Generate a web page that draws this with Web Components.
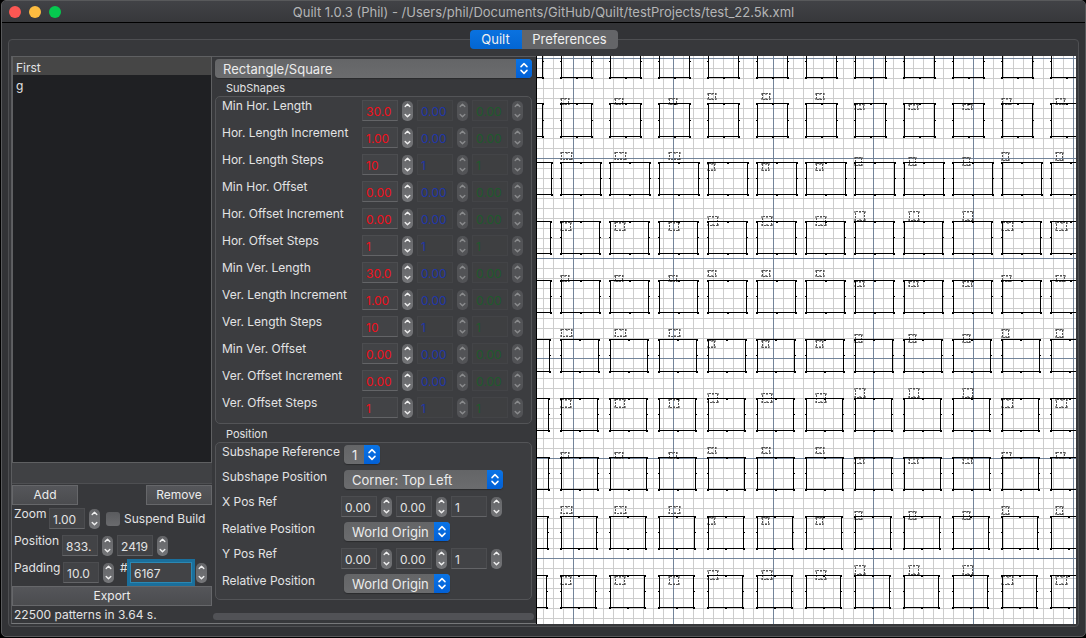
<!DOCTYPE html>
<html lang="en">
<head>
<meta charset="utf-8">
<title>Quilt 1.0.3</title>
<style>
  html, body { margin: 0; background: #000; }
  body { font: 12px/18px Inter, "Liberation Sans", sans-serif; color: #e3e3e4; }
</style>
</head>
<body>
<quilt-app></quilt-app>
<script>
const define = (name, markup, ready) => customElements.define(name, class extends HTMLElement {
  connectedCallback() {
    if (this.shadowRoot) return;
    const t = document.createElement('template');
    t.innerHTML = typeof markup === 'function' ? markup(this) : markup;
    this.attachShadow({ mode: 'open' }).append(t.content.cloneNode(true));
    if (ready) ready(this, this.shadowRoot);
  }
});

/* Number field with a pair of step buttons; the field itself is slotted in. */
define('spin-box', el => `
<style>
  :host { display: inline-flex; align-items: center; gap: 4px; flex: none; }
  ::slotted(input) {
    box-sizing: border-box; width: var(--field, 36px); height: 21px; margin: 0; padding: 2px 0 0 3px;
    border: 1px solid #4c4d50; border-bottom-color: #636467; border-radius: 0; outline: 0;
    background: #424346; color: var(--tone, #e3e3e4); font: inherit; line-height: 17px;
  }
  :host([off]) ::slotted(input) { background: #3e3f41; border-color: #434447; opacity: 1; }
  :host([focus]) ::slotted(input) { border: 1px solid #2b88b3; outline: 3px solid #1a6f9c; }
  .step { display: flex; flex-direction: column; width: 11px; height: 20px; border-radius: 5px; overflow: hidden; background: linear-gradient(#646568, #747578); }
  :host([off]) .step { background: #525356; }
  button { flex: 1; display: flex; align-items: center; justify-content: center; padding: 0; border: 0; background: none; color: #f0f0f0; min-height: 0; }
  :host([off]) button { color: #8a8b8d; }
  svg { width: 7px; height: 5px; display: block; fill: none; stroke: currentColor; stroke-width: 1.4; stroke-linecap: round; stroke-linejoin: round; }
</style>
<slot></slot>
<span class="step">
  <button type="button" tabindex="-1" aria-label="Increase" ${el.hasAttribute('off') ? 'disabled' : ''}><svg viewBox="0 0 7 5"><path d="M1.2 3.6 3.5 1.3 5.8 3.6"/></svg></button>
  <button type="button" tabindex="-1" aria-label="Decrease" ${el.hasAttribute('off') ? 'disabled' : ''}><svg viewBox="0 0 7 5"><path d="M1.2 1.4 3.5 3.7 5.8 1.4"/></svg></button>
</span>`);

/* Pop-up menu: a slotted select with the blue double arrow over its end. */
define('pop-up', `
<style>
  :host { display: inline-grid; flex: none; border-radius: 4px; font-size: 13px; }
  ::slotted(select) {
    grid-area: 1 / 1; appearance: none; box-sizing: border-box; width: 100%; height: 19px; margin: 0;
    padding: 1px 16px 0 8px; border: 0; border-radius: 4px; outline: 0;
    background: linear-gradient(#646567, #6b6c6e); color: #ececec; font: inherit; line-height: 18px;
    box-shadow: 0 1px 1px #2a2b2d;
  }
  .arrow { grid-area: 1 / 1; justify-self: end; width: 16px; height: 19px; border-radius: 0 4px 4px 0; background: linear-gradient(#0a74e6, #0260d6); pointer-events: none; z-index: 1; }
  svg { display: block; width: 16px; height: 19px; fill: none; stroke: #fff; stroke-width: 1.5; stroke-linecap: round; stroke-linejoin: round; }
</style>
<slot></slot>
<span class="arrow"><svg viewBox="0 0 16 19"><path d="M5 7.6 8 4.6 11 7.6M5 11.4 8 14.4 11 11.4"/></svg></span>`);

/* One line of the SubShapes form: a label and a red, a blue and a green value. */
define('param-row', el => {
  const [a, b] = el.getAttribute('values').split(',');
  const name = el.getAttribute('name');
  return `
<style>
  :host { display: flex; height: 27px; padding: 0 8px 0 6px; align-items: flex-start; }
  label { flex: 1; line-height: 18px; white-space: nowrap; }
  .fields { display: flex; gap: 4px; padding-top: 3px; }
  .r { --tone: #f0101c; } .g { --tone: #1f5a2c; } .b { --tone: #1f36a8; }
</style>
<label for="v">${name}</label>
<span class="fields">
  <spin-box class="r"><input id="v" value="${a}"></spin-box>
  <spin-box class="b" off><input disabled aria-label="${name}, second" value="${b}"></spin-box>
  <spin-box class="g" off><input disabled aria-label="${name}, third" value="${b}"></spin-box>
</span>`;
});

/* Titled group with a rounded frame. */
define('group-box', el => `
<style>
  :host { display: block; }
  h2 { margin: 0; padding-left: 11px; font-size: 11px; line-height: 15px; font-weight: 400; }
  .frame { border: 1px solid #535457; border-radius: 5px; background: #3c3d40; padding-bottom: 2px; }
</style>
<h2>${el.getAttribute('heading')}</h2>
<div class="frame"><slot></slot></div>`);

define('position-form', `
<style>
  :host { display: block; }
  .row { display: flex; height: 25px; padding-left: 6px; }
  .tall { height: 27px; }
  label { width: 122px; flex: none; line-height: 18px; white-space: nowrap; }
  pop-up { align-self: flex-start; margin-top: 2px; }
  .fields { display: flex; gap: 4px; padding-top: 3px; margin-left: -3px; height: 21px; }
  .w1 { width: 36px; } .w2 { width: 159px; } .w3 { width: 106px; }
</style>
<div class="row"><label for="a">Subshape Reference</label><pop-up class="w1"><select id="a"><option>1</option></select></pop-up></div>
<div class="row"><label for="b">Subshape Position</label><pop-up class="w2"><select id="b"><option>Corner: Top Left</option></select></pop-up></div>
<div class="row tall"><label for="c">X Pos Ref</label><span class="fields">
  <spin-box><input id="c" value="0.00"></spin-box><spin-box><input aria-label="X Pos Ref, second" value="0.00"></spin-box><spin-box><input aria-label="X Pos Ref, third" value="1"></spin-box></span></div>
<div class="row"><label for="d">Relative Position</label><pop-up class="w3"><select id="d"><option>World Origin</option></select></pop-up></div>
<div class="row tall"><label for="e">Y Pos Ref</label><span class="fields">
  <spin-box><input id="e" value="0.00"></spin-box><spin-box><input aria-label="Y Pos Ref, second" value="0.00"></spin-box><spin-box><input aria-label="Y Pos Ref, third" value="1"></spin-box></span></div>
<div class="row"><label for="f">Relative Position</label><pop-up class="w3"><select id="f"><option>World Origin</option></select></pop-up></div>`);

define('shape-editor', `
<style>
  :host { display: flex; flex-direction: column; padding: 2px 4px 0 3px; border-top: 1px solid #5b5c5f; border-bottom: 1px solid #77787a; box-sizing: border-box; min-width: 0; }
  pop-up { display: grid; margin-bottom: 3px; }
  .second { margin-top: 3px; }
  .scroll { height: 7px; margin: auto -2px 3px; border-radius: 4px; background: #515256; }
</style>
<pop-up><select aria-label="Shape"><option>Rectangle/Square</option></select></pop-up>
<group-box heading="SubShapes">
  <param-row name="Min Hor. Length" values="30.0,0.00"></param-row>
  <param-row name="Hor. Length Increment" values="1.00,0.00"></param-row>
  <param-row name="Hor. Length Steps" values="10,1"></param-row>
  <param-row name="Min Hor. Offset" values="0.00,0.00"></param-row>
  <param-row name="Hor. Offset Increment" values="0.00,0.00"></param-row>
  <param-row name="Hor. Offset Steps" values="1,1"></param-row>
  <param-row name="Min Ver. Length" values="30.0,0.00"></param-row>
  <param-row name="Ver. Length Increment" values="1.00,0.00"></param-row>
  <param-row name="Ver. Length Steps" values="10,1"></param-row>
  <param-row name="Min Ver. Offset" values="0.00,0.00"></param-row>
  <param-row name="Ver. Offset Increment" values="0.00,0.00"></param-row>
  <param-row name="Ver. Offset Steps" values="1,1"></param-row>
</group-box>
<group-box class="second" heading="Position"><position-form></position-form></group-box>
<div class="scroll"></div>`);

define('pattern-list', `
<style>
  :host { display: flex; flex-direction: column; border: 1px solid #5f6062; background: #1f2023; min-height: 0; }
  ul { list-style: none; margin: 0; padding: 0; }
  li { padding: 1px 3px 0; height: 17px; line-height: 20px; }
  li.on { background: #464646; }
</style>
<ul><li class="on">First</li><li>g</li></ul>`);

define('side-panel', `
<style>
  :host { display: flex; flex-direction: column; border-left: 1px solid #5b5c5f; border-bottom: 1px solid #77787a; box-sizing: border-box; min-width: 0; }
  pattern-list { flex: 1; }
  .strip { height: 20px; background: #404144; border-bottom: 1px solid #4e4f52; margin-bottom: 1px; }
  .buttons { display: flex; justify-content: space-between; }
  button { box-sizing: border-box; height: 20px; width: 66px; padding: 0; border: 1px solid #66676a; background: linear-gradient(#55565a, #4b4c4f); color: #ececec; font: inherit; line-height: 18px; border-radius: 0; }
  .row { display: flex; height: 27px; padding-left: 2px; }
  .row label { line-height: 18px; white-space: nowrap; }
  .row spin-box { align-self: flex-start; margin-top: 3px; }
  .z { width: 35px; } .p { width: 48px; } .d { width: 49px; }
  .gap { margin-left: 4px; }
  .check { display: flex; align-items: center; gap: 4px; margin-left: 6px; height: 27px; }
  .check input { appearance: none; width: 14px; height: 14px; margin: 0; border-radius: 3px; background: linear-gradient(#5a5b5e, #6a6b6e); }
  .hash { margin-left: 6px; width: 10px; }
  .wide { --field: 62px; }
  .export { width: 100%; }
  output { padding-left: 2px; line-height: 18px; height: 17px; white-space: nowrap; }
</style>
<pattern-list></pattern-list>
<div class="strip"></div>
<div class="buttons"><button type="button">Add</button><button type="button">Remove</button></div>
<div class="row"><label class="z" for="z">Zoom</label><spin-box><input id="z" value="1.00"></spin-box><label class="check"><input type="checkbox">Suspend Build</label></div>
<div class="row"><label class="p" for="x">Position</label><spin-box><input id="x" value="833."></spin-box><spin-box class="gap"><input aria-label="Position, vertical" value="2419"></spin-box></div>
<div class="row"><label class="d" for="g">Padding</label><spin-box><input id="g" value="10.0"></spin-box><label class="hash" for="n">#</label><spin-box class="wide" focus><input id="n" value="6167"></spin-box></div>
<button class="export" type="button">Export</button>
<output>22500 patterns in 3.64 s.</output>`);

/* Drawing surface: ruled grid, the outlined shapes and their dashed companions. */
define('pattern-canvas', `
<style>
  :host { display: block; background: #fff; min-width: 0; min-height: 0; overflow: hidden; }
  svg { display: block; width: 100%; height: 100%; }
</style>
<svg role="img" aria-label="Pattern preview" shape-rendering="crispEdges">
  <defs>
    <pattern id="fine" width="10" height="10" patternUnits="userSpaceOnUse"><path d="M6 0h1v10h-1zM0 2h10v1H0z" fill="#cdcdcd"/></pattern>
    <pattern id="major" width="100" height="100" patternUnits="userSpaceOnUse"><path d="M36 0h1v100h-1zM0 2h100v1H0z" fill="#73849a"/></pattern>
  </defs>
  <rect width="100%" height="100%" fill="url(#fine)"/>
  <rect width="100%" height="100%" fill="url(#major)"/>
  <g id="small" fill="#555"></g>
  <g id="large"></g>
</svg>`, (el, root) => {
  // Each row of shapes: top, width, height.
  const rows = [[-12, 30, 33], [47, 30, 33], [106, 39, 32], [165, 38, 32], [224, 38, 32], [283, 37, 32],
                [342, 36, 32], [401, 36, 32], [460, 35, 32], [519, 34, 32]];
  const pitch = 49, first = 24;
  let large = '';
  for (const [top, w, h] of rows) {
    const my = top + Math.ceil(h / 2);
    for (let c = -1; c < 11; c++) {
      const x = first + c * pitch, mx = x + Math.floor(w / 2);
      large += `<rect x="${x + .5}" y="${top + .5}" width="${w}" height="${h}" fill="none" stroke="#000"/>`;
      for (const [px, py] of [[x, top], [x + w, top], [x, top + h], [x + w, top + h], [mx, top], [mx, top + h], [x, my], [x + w, my]])
        large += `<path d="M${px - (px === x ? 1 : 0)} ${py}h2v${py === my ? 1 : 2}h-2z"/>`;
    }
  }
  root.getElementById('large').innerHTML = large;

  // Dashed boxes come in groups of three: [y, width, height] for each group.
  const kinds = [
    [[42, 7, 6], [37, 7, 6], [48, 8, 5], [42, 8, 6]],
    [[96, 10, 7], [107, 6, 7], [101, 6, 8], [96, 6, 8]],
    [[166, 9, 8], [160, 9, 9], [155, 9, 9], [166, 10, 8]]
  ];
  let small = '';
  for (let rep = 0; rep < 3; rep++)
    for (const kind of kinds)
      kind.forEach(([top, w, h], g) => {
        const y = top + rep * 177;
        for (let k = 0; k < 3; k++) {
          const x = first + g * 147 + k * 54;
          small += `<rect x="${x + .5}" y="${y + .5}" width="${w}" height="${h}" fill="none" stroke="#555" stroke-dasharray="2 1"/>`;
          for (const [px, py] of [[x - 1, y], [x + w, y], [x - 1, y + h - 1], [x + w, y + h - 1], [x + (w >> 1), y], [x + (w >> 1), y + h - 1]])
            small += `<path d="M${px} ${py}h2v2h-2z" opacity=".6"/>`;
        }
      });
  root.getElementById('small').innerHTML = small;
});

define('title-bar', `
<style>
  :host { display: grid; grid-template-columns: 1fr auto 1fr; align-items: center; height: 20px; padding: 1px 7px 0; border-bottom: 1px solid #000; background: linear-gradient(#414246, #37383b); color: #b4b5b6; }
  .lights { display: flex; gap: 8px; }
  i { width: 12px; height: 12px; border-radius: 50%; background: #fc5753; }
  i + i { background: #fdbc40; } i + i + i { background: #06c94f; }
  h1 { margin: 0; font-size: 13px; font-weight: 400; line-height: 18px; white-space: nowrap; }
</style>
<span class="lights"><i></i><i></i><i></i></span><h1><slot></slot></h1>`);

define('tab-switch', `
<style>
  :host { display: flex; position: relative; z-index: 1; font-size: 13px; }
  button { box-sizing: border-box; height: 19px; width: 96px; padding: 0; border: 0; border-radius: 0 4px 4px 0; background: #646568; color: #f0f0f0; font: inherit; line-height: 19px; }
  button.on { width: 52px; border-radius: 4px 0 0 4px; background: linear-gradient(#0a72e0, #0366d2); }
</style>
<button class="on" type="button" aria-pressed="true">Quilt</button><button type="button" aria-pressed="false">Preferences</button>`);

define('quilt-app', `
<style>
  :host { display: flex; flex-direction: column; box-sizing: border-box; min-height: 100vh; padding: 0 0 1px 1px; }
  .window { flex: 1; display: flex; flex-direction: column; border: 1px solid #58595b; border-radius: 5px; overflow: hidden; background: #323336; }
  .tabs { display: flex; justify-content: center; padding: 7px 0 0; margin-bottom: -10px; }
  .frame { flex: 1; display: grid; grid-template-columns: 201px 324px 1fr; padding: 16px 2px 2px; margin: 0 6px 9px 6px; border: 1px solid #4e4f52; border-radius: 4px; background: #37383b; }
  pattern-canvas { margin-left: 1px; box-shadow: -1px 0 #000; }
</style>
<div class="window">
  <title-bar>Quilt 1.0.3 (Phil) - /Users/phil/Documents/GitHub/Quilt/testProjects/test_22.5k.xml</title-bar>
  <div class="tabs"><tab-switch></tab-switch></div>
  <div class="frame"><side-panel></side-panel><shape-editor></shape-editor><pattern-canvas></pattern-canvas></div>
</div>`);
</script>
</body>
</html>
